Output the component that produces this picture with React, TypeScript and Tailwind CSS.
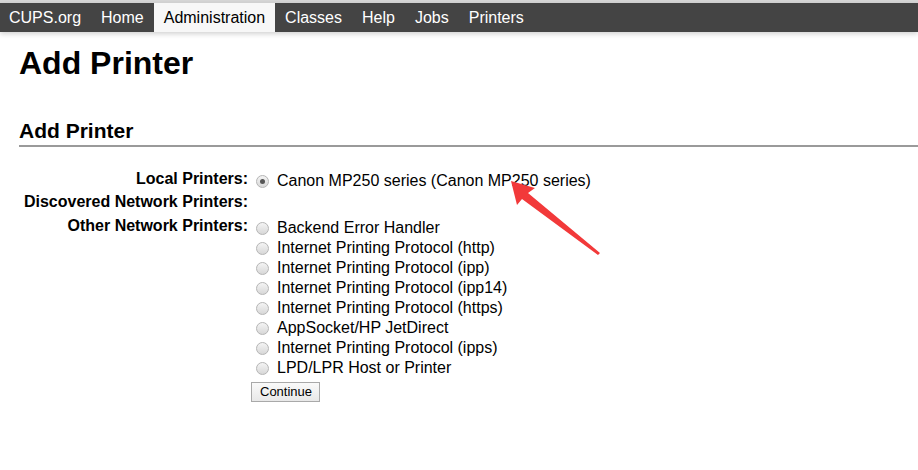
import React from "react"

const others = [
  "Backend Error Handler",
  "Internet Printing Protocol (http)",
  "Internet Printing Protocol (ipp)",
  "Internet Printing Protocol (ipp14)",
  "Internet Printing Protocol (https)",
  "AppSocket/HP JetDirect",
  "Internet Printing Protocol (ipps)",
  "LPD/LPR Host or Printer",
]

function Radio({ checked = false }: { checked?: boolean }) {
  return (
    <span className="flex h-[13px] w-[13px] items-center justify-center rounded-full border border-[#b5b5b5] bg-gradient-to-b from-[#f4f4f4] to-[#d8d8d8]">
      {checked && <span className="h-[5px] w-[5px] rounded-full bg-[#555]" />}
    </span>
  )
}

function Option({ label, checked = false }: { label: string; checked?: boolean }) {
  return (
    <div className="flex h-5 items-center leading-[20px]">
      <span className="ml-[6px] mr-[8px]">
        <Radio checked={checked} />
      </span>
      <span>{label}</span>
    </div>
  )
}

export default function App() {
  const nav = ["CUPS.org", "Home", "Administration", "Classes", "Help", "Jobs", "Printers"]
  return (
    <div className="relative h-[470px] w-[918px] overflow-hidden bg-white text-[16px] text-black [font-family:'Liberation_Sans',Arial,sans-serif]">
      {/* Header */}
      <div className="border-t-[3px] border-[#d6d6d6]">
        <nav className="flex h-[29px] items-stretch bg-[#444] shadow-[0_2px_5px_rgba(0,0,0,0.18)]">
          <div className="flex -ml-px">
            {nav.map((n) => (
              <a
                key={n}
                className={
                  n === "Administration"
                    ? "flex items-center bg-[#f7f7f7] px-[10px] text-black"
                    : "flex items-center px-[10px] text-white"
                }
              >
                {n}
              </a>
            ))}
          </div>
        </nav>
      </div>

      <div className="pl-[19px]">
        <h1 className="mt-[13px] text-[32px] font-bold leading-[36px]">Add Printer</h1>

        <h2 className="mt-[39px] text-[21px] font-bold leading-[22px]">Add Printer</h2>
        <div className="mt-[3px] h-[2px] bg-[#9a9a9a]" />

        {/* Form */}
        <div className="mt-[22px] grid grid-cols-[229px_1fr] gap-x-[2px] leading-[20px]">
          <div className="flex h-[23px] items-start justify-end font-bold">Local Printers:</div>
          <div className="h-[23px] pt-[2px]">
            <Option label="Canon MP250 series (Canon MP250 series)" checked />
          </div>

          <div className="flex h-[24px] items-start justify-end font-bold">Discovered Network Printers:</div>
          <div className="h-[24px]" />

          <div className="flex items-start justify-end font-bold">Other Network Printers:</div>
          <div className="flex flex-col pt-[2px]">
            {others.map((o) => (
              <Option key={o} label={o} />
            ))}
            <div className="mt-[3px] ml-[1px]">
              <button className="h-[20px] border border-[#a9a9a9] bg-gradient-to-b from-[#fafafa] to-[#e8e8e8] pl-[8px] pr-[7px] text-[13px] leading-[16px] text-black">
                Continue
              </button>
            </div>
          </div>
        </div>
      </div>

      {/* Annotation arrow */}
      <svg className="absolute left-0 top-0" width="918" height="470" viewBox="0 0 918 470">
        <polygon
          points="511,181 535,188 528,193 600,253 598,255 522,199 517,205"
          fill="#f2393a"
        />
      </svg>
    </div>
  )
}
